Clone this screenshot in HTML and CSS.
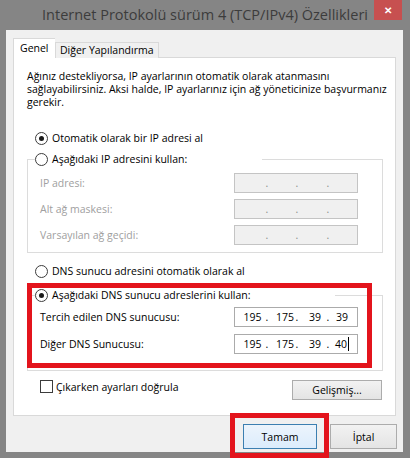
FILE: index.html
```html
<!DOCTYPE html>
<html lang="tr">
<head>
    <meta charset="UTF-8">
    <title>Internet Protokolü sürüm 4 (TCP/IPv4) Özellikleri</title>
    <link rel="stylesheet" href="styles.css">
</head>
<body>
    <div class="window">
        <div class="titlebar">
            <span class="title">Internet Protokolü sürüm 4 (TCP/IPv4) Özellikleri</span>
            <span class="close">&#x2715;</span>
        </div>

        <div class="dialog">
            <div class="tabs">
                <div class="tab active">Genel</div>
                <div class="tab">Diğer Yapılandırma</div>
            </div>

            <div class="panel">
                <p class="intro">Ağınız destekliyorsa, IP ayarlarının otomatik olarak atanmasını<br>sağlayabilirsiniz. Aksi halde, IP ayarlarınız için ağ yöneticinize başvurmanız<br>gerekir.</p>

                <div class="option first"><span class="radio checked"></span>Otomatik olarak bir IP adresi al</div>

                <fieldset class="group">
                    <legend class="option"><span class="radio"></span>Aşağıdaki IP adresini kullan:</legend>
                    <div class="field disabled">
                        <span>IP adresi:</span>
                        <div class="ip"><span class="seg s1"></span><span class="dot">.</span><span class="seg s2"></span><span class="dot">.</span><span class="seg s3"></span><span class="dot">.</span><span class="seg s4"></span></div>
                    </div>
                    <div class="field disabled">
                        <span>Alt ağ maskesi:</span>
                        <div class="ip"><span class="seg s1"></span><span class="dot">.</span><span class="seg s2"></span><span class="dot">.</span><span class="seg s3"></span><span class="dot">.</span><span class="seg s4"></span></div>
                    </div>
                    <div class="field disabled">
                        <span>Varsayılan ağ geçidi:</span>
                        <div class="ip"><span class="seg s1"></span><span class="dot">.</span><span class="seg s2"></span><span class="dot">.</span><span class="seg s3"></span><span class="dot">.</span><span class="seg s4"></span></div>
                    </div>
                </fieldset>

                <div class="option dns-auto"><span class="radio"></span>DNS sunucu adresini otomatik olarak al</div>

                <fieldset class="group dns">
                    <legend class="option"><span class="radio checked"></span>Aşağıdaki DNS sunucu adreslerini kullan:</legend>
                    <div class="field">
                        <span>Tercih edilen DNS sunucusu:</span>
                        <div class="ip"><span class="seg s1">195</span><span class="dot">.</span><span class="seg s2">175</span><span class="dot">.</span><span class="seg s3">39</span><span class="dot">.</span><span class="seg s4">39</span></div>
                    </div>
                    <div class="field second">
                        <span>Diğer DNS Sunucusu:</span>
                        <div class="ip"><span class="seg s1">195</span><span class="dot">.</span><span class="seg s2">175</span><span class="dot">.</span><span class="seg s3">39</span><span class="dot">.</span><span class="seg s4"><span class="caret">40</span></span></div>
                    </div>
                </fieldset>

                <div class="panel-footer">
                    <label class="check"><span class="box"></span>Çıkarken ayarları doğrula</label>
                    <button class="btn advanced">Gelişmiş...</button>
                </div>
            </div>

            <div class="actions">
                <button class="btn default">Tamam</button>
                <button class="btn cancel">İptal</button>
            </div>
        </div>

        <!-- red highlight marks drawn over the dialog -->
        <div class="mark mark-dns"></div>
        <div class="mark mark-ok"></div>
    </div>
</body>
</html>
```

FILE: styles.css
```css
html, body {
    margin: 0;
    padding: 0;
}
body {
    font-family: "Segoe UI", "Open Sans", sans-serif;
    font-size: 10.5px;
    color: #000;
    background-color: #858585;
}
.window {
    position: relative;
    width: 410px;
    height: 458px;
    overflow: hidden;
    background-color: #858585;
}
.titlebar {
    display: grid;
    grid-template-columns: 1fr auto 1fr;
    height: 30px;
}
.title {
    grid-column: 2;
    padding-top: 6px;
    font-size: 14.5px;
    line-height: 18px;
    color: #3c3c3c;
    white-space: nowrap;
}
.close {
    grid-column: 3;
    justify-self: end;
    width: 28px;
    height: 20px;
    margin-right: 8px;
    background-color: #c75050;
    color: #fff;
    font-size: 10px;
    font-weight: bold;
    line-height: 20px;
    text-align: center;
}
.dialog {
    height: 422px;
    margin: 0 7px 0 6px;
    padding: 8px 0 0 7px;
    box-sizing: border-box;
    background-color: #f0f0f0;
}
.tabs {
    display: flex;
    align-items: flex-end;
    position: relative;
    z-index: 1;
    margin-bottom: -1px;
}
.tab {
    height: 15px;
    padding: 0 4px;
    line-height: 15px;
    border: 1px solid #d9d9d9;
    border-bottom: none;
    background-color: #f0f0f0;
    white-space: nowrap;
}
.tab.active {
    width: 35px;
    height: 19px;
    line-height: 19px;
    padding: 0 0 0 6px;
    border-right: none;
    background-color: #fff;
}
.panel {
    width: 383px;
    height: 359px;
    box-sizing: border-box;
    padding: 0 12px 0 13px;
    border: 1px solid #d9d9d9;
    background-color: #fff;
}
.intro {
    margin: 12px 0 0;
    line-height: 13px;
    white-space: nowrap;
}
.option {
    display: flex;
    align-items: center;
    height: 14px;
    padding-left: 8px;
    white-space: nowrap;
}
.option.first {
    margin-top: 22px;
}
.option.dns-auto {
    margin-top: 11px;
}
.radio {
    width: 11px;
    height: 11px;
    margin-right: 4px;
    border: 1px solid #3c3c3c;
    border-radius: 50%;
    background-color: #fff;
    position: relative;
    flex: none;
}
.radio.checked::after {
    content: "";
    position: absolute;
    left: 3px;
    top: 3px;
    width: 5px;
    height: 5px;
    border-radius: 50%;
    background-color: #1a1a1a;
}
.group {
    margin: 7px 0 0;
    padding: 0 24px 7px 12px;
    border: 1px solid #dcdcdc;
}
.group legend {
    width: 227px;
    padding: 0;
    margin-left: -5px;
    background-color: #fff;
}
.group.dns {
    margin-top: 10px;
    padding-bottom: 16px;
}
.group.dns legend {
    width: 300px;
}
.field {
    display: flex;
    justify-content: space-between;
    align-items: center;
    margin-top: 6px;
}
.group legend + .field {
    margin-top: 7px;
}
.group.dns legend + .field {
    margin-top: 5px;
}
.field.second {
    margin-top: 7px;
}
.field.disabled {
    color: #a0a0a0;
}
.ip {
    display: flex;
    width: 124px;
    height: 20px;
    box-sizing: border-box;
    border: 1px solid #ababab;
    background-color: #fff;
    line-height: 18px;
    color: #000;
}
.disabled .ip {
    background-color: #f0f0f0;
    border-color: #c4c4c4;
    color: #8a8a8a;
}
.seg {
    text-align: center;
}
.s1 { width: 25px; padding-left: 5px; }
.s2 { width: 20px; padding-left: 6px; }
.s3 { width: 22px; padding-left: 5px; }
.s4 { width: 24px; padding-right: 3px; }
.dot {
    width: 4px;
    text-align: center;
}
.caret {
    border-right: 1px solid #000;
    padding-right: 1px;
}
.panel-footer {
    display: flex;
    justify-content: space-between;
    align-items: flex-start;
    margin-top: 9px;
}
.check {
    display: flex;
    align-items: center;
    padding-left: 13px;
    line-height: 12px;
}
.box {
    width: 11px;
    height: 11px;
    margin-right: 3px;
    border: 1px solid #3c3c3c;
    background-color: #fff;
}
.btn {
    font-family: inherit;
    font-size: 10.5px;
    color: #000;
    height: 20px;
    padding: 0;
    border: 1px solid #acacac;
    background: linear-gradient(#f2f2f2, #e4e4e4);
}
.advanced {
    width: 90px;
    margin-right: 1px;
}
.actions {
    display: flex;
    justify-content: flex-end;
    gap: 13px;
    margin-top: 8px;
    padding-right: 6px;
}
.actions .btn {
    height: 25px;
}
.default {
    width: 74px;
    border-color: #3c7fb1;
    background: linear-gradient(#ecf4fc, #dcecfc);
}
.cancel {
    width: 67px;
}
.mark {
    position: absolute;
    border: 5px solid #e3141c;
    box-sizing: border-box;
}
.mark-dns {
    left: 27px;
    top: 283px;
    width: 345px;
    height: 85px;
}
.mark-ok {
    left: 230px;
    top: 413px;
    width: 99px;
    height: 45px;
}
```
